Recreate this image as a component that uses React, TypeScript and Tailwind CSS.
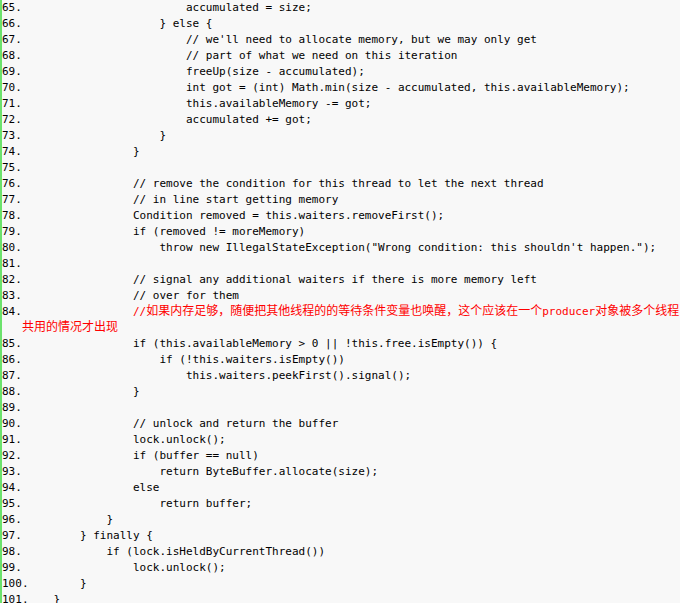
const lines: [number, string][] = [
  [65, "                        accumulated = size;"],
  [66, "                    } else {"],
  [67, "                        // we'll need to allocate memory, but we may only get"],
  [68, "                        // part of what we need on this iteration"],
  [69, "                        freeUp(size - accumulated);"],
  [70, "                        int got = (int) Math.min(size - accumulated, this.availableMemory);"],
  [71, "                        this.availableMemory -= got;"],
  [72, "                        accumulated += got;"],
  [73, "                    }"],
  [74, "                }"],
  [75, ""],
  [76, "                // remove the condition for this thread to let the next thread"],
  [77, "                // in line start getting memory"],
  [78, "                Condition removed = this.waiters.removeFirst();"],
  [79, "                if (removed != moreMemory)"],
  [80, "                    throw new IllegalStateException(\"Wrong condition: this shouldn't happen.\");"],
  [81, ""],
  [82, "                // signal any additional waiters if there is more memory left"],
  [83, "                // over for them"],
  [84, "__RED__"],
  [85, "                if (this.availableMemory > 0 || !this.free.isEmpty()) {"],
  [86, "                    if (!this.waiters.isEmpty())"],
  [87, "                        this.waiters.peekFirst().signal();"],
  [88, "                }"],
  [89, ""],
  [90, "                // unlock and return the buffer"],
  [91, "                lock.unlock();"],
  [92, "                if (buffer == null)"],
  [93, "                    return ByteBuffer.allocate(size);"],
  [94, "                else"],
  [95, "                    return buffer;"],
  [96, "            }"],
  [97, "        } finally {"],
  [98, "            if (lock.isHeldByCurrentThread())"],
  [99, "                lock.unlock();"],
  [100, "        }"],
  [101, "    }"],
];

const cjk = "text-[12px] leading-[8px] font-['Noto_Sans_CJK_SC',sans-serif]";

// 红色中文注释：第一行在“线程”处换行
const RedComment = () => (
  <>
    <span className="whitespace-pre">
      {"                "}
      <span className="text-[#ff0000]">
        //
        <span className={cjk}>如果内存足够，随便把其他线程的的等待条件变量也唤醒，这个应该在一个</span>
        producer
        <span className={cjk}>对象被多个线程</span>
      </span>
    </span>
    <br />
    <span className={`${cjk} text-[#ff0000]`}>共用的情况才出现</span>
  </>
);

export default function App() {
  return (
    <div className="min-h-screen overflow-hidden bg-[#f8f8f8] border-l-2 border-[#6ce26c] font-['DejaVu_Sans_Mono',monospace] text-[11px] leading-[16px] text-black">
      <ol>
        {lines.map(([n, code]) => (
          <li key={n} className="flex">
            <span className="w-[20px] shrink-0 whitespace-nowrap">{n}.</span>
            <span className="flex-1 min-w-0 whitespace-pre-wrap indent-[5px]">
              {code === "__RED__" ? <RedComment /> : code}
            </span>
          </li>
        ))}
      </ol>
    </div>
  );
}
